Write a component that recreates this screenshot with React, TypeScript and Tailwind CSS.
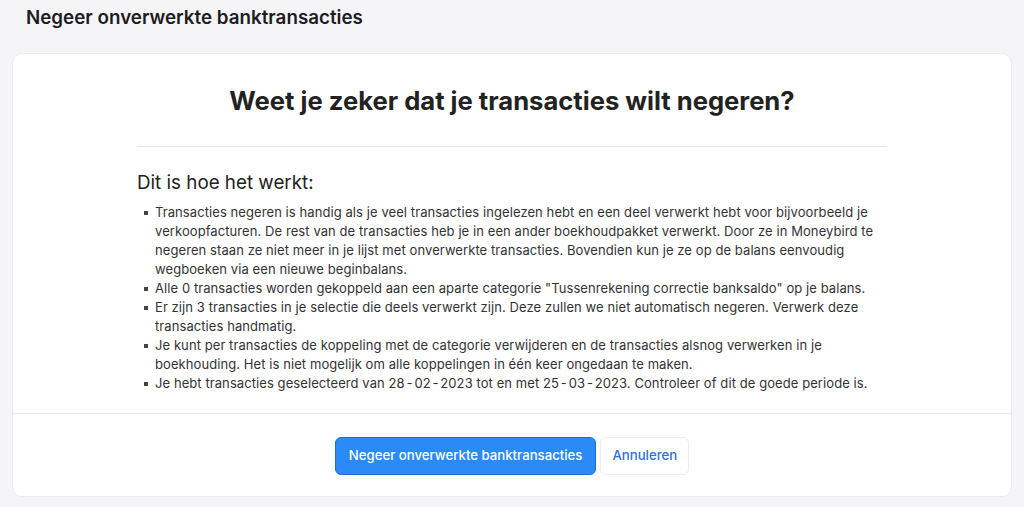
function DateText({ value }: { value: string }) {
  const parts = value.split('-')
  return (
    <span>
      {parts.map((p, i) => (
        <span key={i}>
          {i > 0 && <span className="mx-[1.8px]">-</span>}
          {p}
        </span>
      ))}
    </span>
  )
}

export default function App() {
  const items = [
    "Transacties negeren is handig als je veel transacties ingelezen hebt en een deel verwerkt hebt voor bijvoorbeeld je verkoopfacturen. De rest van de transacties heb je in een ander boekhoudpakket verwerkt. Door ze in Moneybird te negeren staan ze niet meer in je lijst met onverwerkte transacties. Bovendien kun je ze op de balans eenvoudig wegboeken via een nieuwe beginbalans.",
    'Alle 0 transacties worden gekoppeld aan een aparte categorie "Tussenrekening correctie banksaldo" op je balans.',
    "Er zijn 3 transacties in je selectie die deels verwerkt zijn. Deze zullen we niet automatisch negeren. Verwerk deze transacties handmatig.",
    "Je kunt per transacties de koppeling met de categorie verwijderen en de transacties alsnog verwerken in je boekhouding. Het is niet mogelijk om alle koppelingen in één keer ongedaan te maken.",
  ]

  return (
    <div className="min-h-[507px] bg-[#f5f5f7] font-['Inter',sans-serif] text-[#1d1d1f]">
      <div className="px-[26px] pt-[6px] h-[53px]">
        <h1 className="text-[18.8px] font-semibold leading-[24px]">Negeer onverwerkte banktransacties</h1>
      </div>
      <div className="mx-[12px] rounded-[10px] border border-[#ebebee] bg-white">
        <div className="px-[124px] pt-[30px]">
          <h2 className="text-center text-[25.6px] font-bold leading-[34px] text-[#222]">
            Weet je zeker dat je transacties wilt negeren?
          </h2>
          <div className="mt-[28px] h-px bg-[#e6e6e9]" />
          <h3 className="mt-[24px] text-[18.8px] leading-[24px] text-[#222]">Dit is hoe het werkt:</h3>
          <ul className="mt-[8px] pb-[20px] pl-[18px] text-[13px] leading-[19px] tracking-[0.08px] text-[#333]">
            {items.map((t, i) => (
              <li key={i} className="relative pr-[8px]">
                <span className="absolute left-[-11px] top-[8px] h-[4px] w-[4px] bg-[#444]" />
                {t}
              </li>
            ))}
            <li className="relative pr-[8px]">
              <span className="absolute left-[-11px] top-[8px] h-[4px] w-[4px] bg-[#444]" />
              Je hebt transacties geselecteerd van <DateText value="28-02-2023" /> tot en met{' '}
              <DateText value="25-03-2023" />. Controleer of dit de goede periode is.
            </li>
          </ul>
        </div>
        <div className="border-t border-[#ebebee] flex justify-center gap-[4px] pt-[23px] pb-[21px]">
          <button className="h-[38px] rounded-[6px] border border-[#1c6fd1] bg-[#2a8af6] px-[13px] text-[13.2px] font-medium text-white">
            Negeer onverwerkte banktransacties
          </button>
          <button className="h-[38px] rounded-[6px] border border-[#ececef] bg-white px-[11px] text-[13.2px] font-medium text-[#2f6fdd]">
            Annuleren
          </button>
        </div>
      </div>
    </div>
  )
}
